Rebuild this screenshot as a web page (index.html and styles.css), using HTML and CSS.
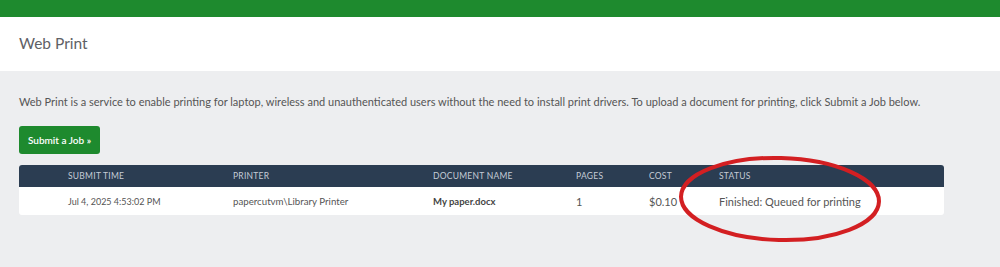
FILE: index.html
```html
<!DOCTYPE html>
<html>
<head>
<meta charset="utf-8">
<link rel="stylesheet" href="styles.css">
</head>
<body>
<div class="topbar"></div>
<header class="pagehead"><h1>Web Print</h1></header>
<main class="content">
  <p class="intro">Web Print is a service to enable printing for laptop, wireless and unauthenticated users without the need to install print drivers. To upload a document for printing, click Submit a Job below.</p>
  <a class="btn">Submit a Job »</a>
  <div class="tablewrap">
    <table class="jobs">
      <thead>
        <tr><th class="c1">Submit Time</th><th class="c2">Printer</th><th class="c3">Document Name</th><th class="c4">Pages</th><th class="c5">Cost</th><th class="c6">Status</th></tr>
      </thead>
      <tbody>
        <tr><td class="c1 date">Jul 4, 2025 4:53:02 PM</td><td class="c2 prn">papercutvm\Library Printer</td><td class="c3 doc">My paper.docx</td><td class="c4">1</td><td class="c5">$0.10</td><td class="c6">Finished: Queued for printing</td></tr>
      </tbody>
    </table>
    <svg class="circle" width="220" height="100" viewBox="0 0 220 100"><ellipse cx="110" cy="50" rx="99" ry="41" transform="rotate(1.5 110 50)" fill="none" stroke="#d31f22" stroke-width="4"/></svg>
  </div>
</main>
</body>
</html>
```
FILE: styles.css
```css
* { box-sizing: border-box; }
html, body { margin: 0; padding: 0; }
body { background: #edeef0; font-family: Lato, "Open Sans", sans-serif; color: #555; width: 1000px; height: 267px; overflow: hidden; }
.topbar { height: 17px; background: #1e8a2e; }
.pagehead { background: #fff; height: 54px; padding: 0 19px; display: flex; align-items: center; }
.pagehead h1 { margin: 0; font-weight: 400; font-size: 15.5px; color: #5f6166; position: relative; top: -1px; }
.content { padding: 22px 19px 0; }
.intro { margin: 0; font-size: 11px; line-height: 18px; color: #555; }
.btn { display: inline-block; margin-top: 15px; background: #1e8a2e; color: #fff; font-size: 10px; font-weight: 600; height: 28px; line-height: 28px; width: 81px; text-align: center; border-radius: 3px; }
.tablewrap { position: relative; margin-top: 11px; width: 925px; }
.jobs { width: 100%; border-collapse: collapse; border-radius: 3px; overflow: hidden; background: #fff; table-layout: fixed; }
.jobs th { background: #2b3d52; color: #c5ccd6; font-size: 8.5px; font-weight: 400; letter-spacing: 0.25px; text-transform: uppercase; text-align: left; height: 22px; padding: 0; }
.jobs td { font-size: 10px; color: #555; height: 28px; padding: 0; }
.jobs td.date { font-size: 9px; }
.jobs td.prn { font-size: 9.7px; }
.jobs td.doc { font-weight: 700; color: #444; font-size: 9.5px; }
.jobs td.c6 { font-size: 11px; }
.jobs td.c4, .jobs td.c5 { font-size: 11px; }
.c1 { width: 214px; padding-left: 49px !important; }
.c2 { width: 200px; }
.c3 { width: 143px; }
.c4 { width: 73px; }
.c5 { width: 70px; }
.c6 { width: auto; }
.circle { position: absolute; left: 651px; top: -16px; pointer-events: none; }
```
